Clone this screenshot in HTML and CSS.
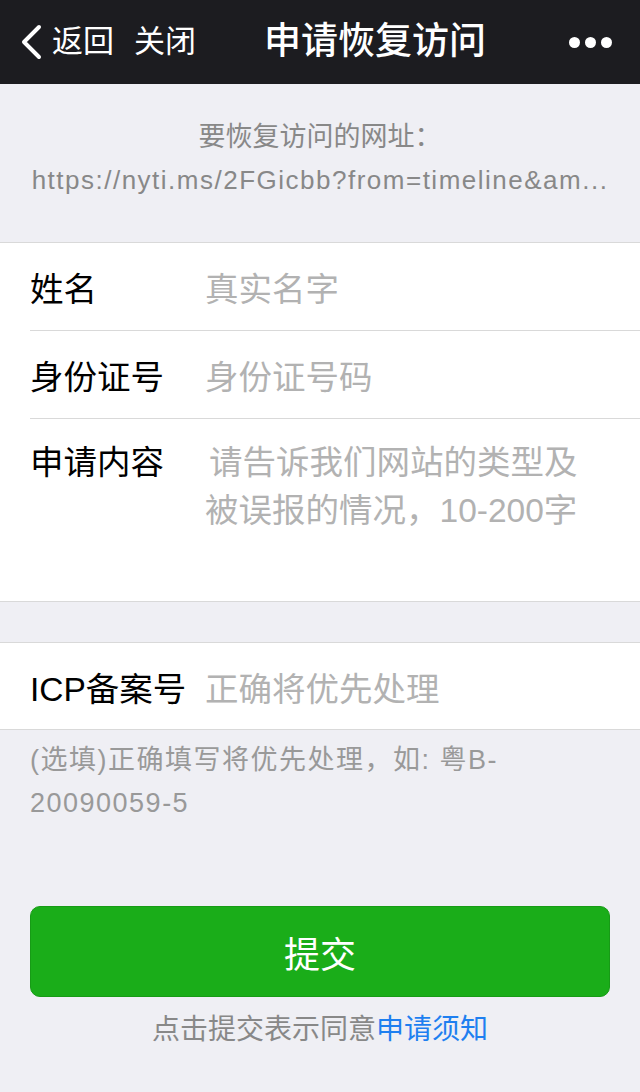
FILE: index.html
```html
<!DOCTYPE html>
<html lang="zh-CN">
<head>
<meta charset="utf-8">
<title>申请恢复访问</title>
<link rel="stylesheet" href="styles.css">
</head>
<body>
<header class="nav">
  <div class="nav-left">
    <svg class="chev" width="24" height="36" viewBox="0 0 24 36"><polyline points="19,3 4,18 19,33" fill="none" stroke="#fff" stroke-width="4" stroke-linecap="round" stroke-linejoin="round"/></svg>
    <span class="nav-btn">返回</span>
    <span class="nav-btn close">关闭</span>
  </div>
  <div class="nav-title">申请恢复访问</div>
  <div class="nav-more"><i></i><i></i><i></i></div>
</header>
<main>
  <section class="url-box">
    <div class="url-title">要恢复访问的网址：</div>
    <div class="url">https://nyti.ms/2FGicbb?from=timeline&amp;am...</div>
  </section>
  <section class="group">
    <div class="row"><span class="label">姓名</span><span class="ph">真实名字</span></div>
    <div class="row"><span class="label">身份证号</span><span class="ph">身份证号码</span></div>
    <div class="row area"><span class="label">申请内容</span><span class="ph indent">请告诉我们网站的类型及<br>被误报的情况，10-200字</span></div>
  </section>
  <section class="group second">
    <div class="row"><span class="label">ICP备案号</span><span class="ph">正确将优先处理</span></div>
  </section>
  <p class="hint">(选填)正确填写将优先处理，如: 粤B-<br>20090059-5</p>
  <div class="btn-wrap"><button class="submit">提交</button></div>
  <p class="agree">点击提交表示同意<span class="link">申请须知</span></p>
</main>
</body>
</html>
```

FILE: styles.css
```css
* { box-sizing: border-box; }
html, body { margin: 0; padding: 0; }
body {
  background: #efeff4;
  font-family: "Liberation Sans", "Noto Sans CJK SC", sans-serif;
  width: 640px;
  min-height: 1092px;
}
.nav {
  height: 84px;
  background: #1c1c20;
  color: #fff;
  display: flex;
  align-items: center;
  padding-left: 20px;
  padding-right: 28px;
}
.nav-left { display: flex; align-items: center; }
.chev { display: block; margin-right: 8px; }
.nav-btn { font-size: 31px; line-height: 40px; }
.nav-btn.close { margin-left: 20px; }
.nav-title { font-size: 37px; margin-left: 68px; line-height: 40px; font-weight: 500; }
.nav-more { margin-left: auto; display: flex; gap: 5px; }
.nav-more i { width: 11px; height: 11px; border-radius: 50%; background: #fff; display: block; }
.url-box {
  padding-top: 32px;
  padding-bottom: 40px;
  text-align: center;
  color: #888;
  font-size: 26px;
  line-height: 43px;
  border-bottom: 1px solid #d9d9d9;
}
.url-title { font-size: 27px; }
.url { letter-spacing: 1.5px; }
.group {
  background: #fff;
  padding-left: 30px;
  border-bottom: 1px solid #d9d9d9;
}
.group.second { margin-top: 40px; border-top: 1px solid #d9d9d9; }
.row {
  display: flex;
  align-items: center;
  height: 88px;
  border-bottom: 1px solid #d9d9d9;
  font-size: 33.5px;
}
.row:last-child { border-bottom: none; height: 87px; }
.group.second .row { height: 86px; }
.row.area { align-items: flex-start; height: 182px; padding-top: 20px; line-height: 48px; }
.label { width: 175px; flex: none; color: #000; }
.ph { color: #b2b2b2; }
.ph.indent { display: block; text-indent: 4px; }
.hint {
  margin: 0;
  padding: 9px 30px 0;
  font-size: 27px;
  letter-spacing: 1.5px;
  line-height: 43px;
  color: #999;
}
.btn-wrap { padding: 81px 30px 0; }
.submit {
  width: 100%;
  height: 91px;
  border: 1px solid #179b16;
  border-radius: 10px;
  background: #1aad19;
  color: #fff;
  font-family: inherit;
  font-size: 36px;
  display: block;
}
.agree {
  margin: 13px 0 0;
  text-align: center;
  font-size: 28px;
  line-height: 40px;
  color: #888;
}
.link { color: #1e7ff0; }
```
